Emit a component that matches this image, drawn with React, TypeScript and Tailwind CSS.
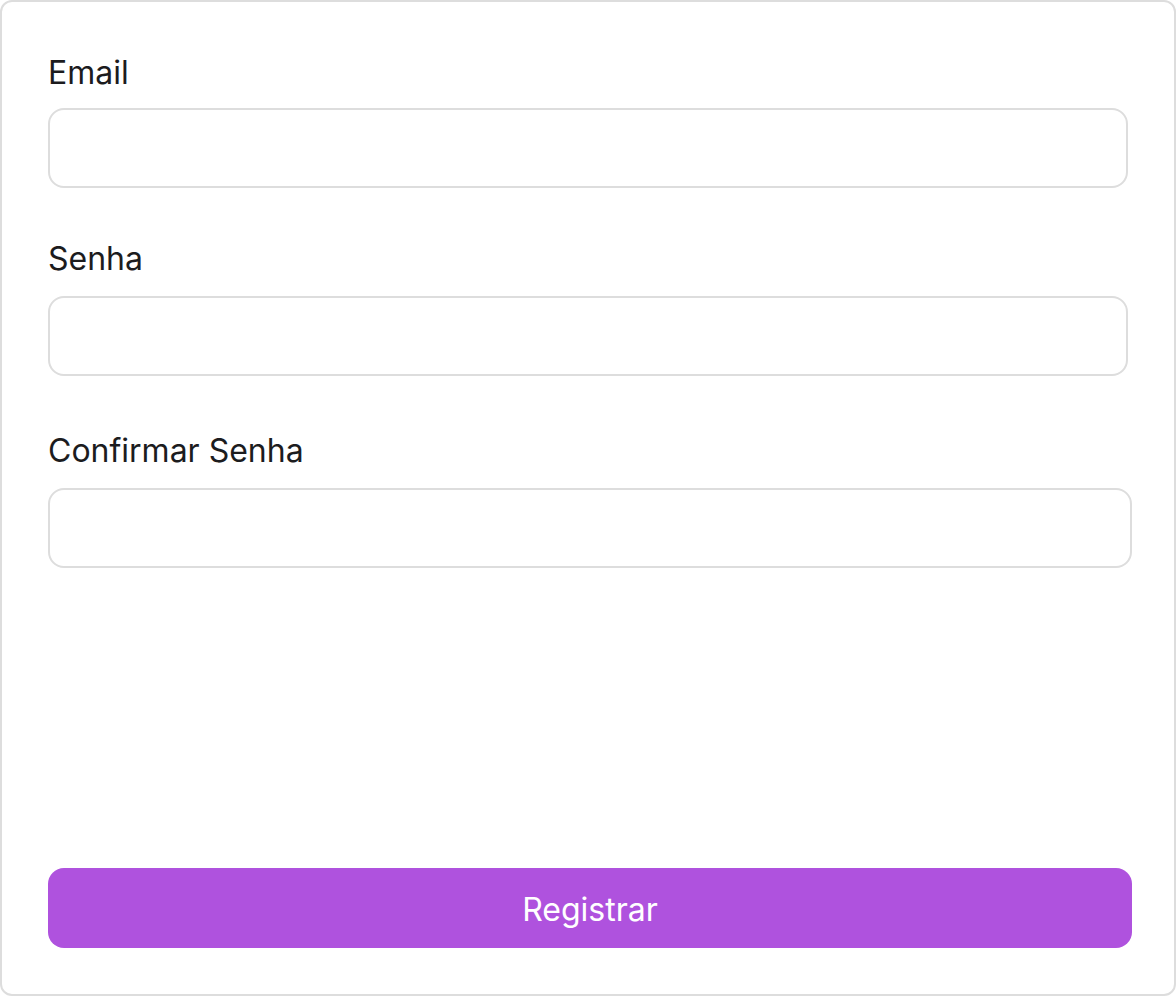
import React from "react";

export default function App() {
  return (
    <div className="w-[1176px] h-[996px] bg-white" style={{ fontFamily: "Inter, 'Noto Sans', sans-serif" }}>
      <div className="w-full h-full border-2 border-[#dddddd] rounded-[12px] bg-white flex flex-col pl-[46px] pt-[47px] pb-[46px]">
        <label className="block h-[48px] leading-[48px] text-[32px] text-[#1c1c1e]">Email</label>
        <input className="mt-[11px] w-[1080px] h-[80px] shrink-0 border-2 border-[#dddddd] rounded-[16px] outline-none px-4 text-[32px]" />
        <label className="block mt-[47px] h-[48px] leading-[48px] text-[32px] text-[#1c1c1e]">Senha</label>
        <input type="password" className="mt-[13px] w-[1080px] h-[80px] shrink-0 border-2 border-[#dddddd] rounded-[16px] outline-none px-4 text-[32px]" />
        <label className="block mt-[51px] h-[48px] leading-[48px] text-[32px] text-[#1c1c1e]">Confirmar Senha</label>
        <input type="password" className="mt-[13px] w-[1084px] h-[80px] shrink-0 border-2 border-[#dddddd] rounded-[16px] outline-none px-4 text-[32px]" />
        <div className="flex-1" />
        <button className="w-[1084px] h-[80px] shrink-0 rounded-[16px] bg-[#af52de] text-white text-[32px] font-normal pt-[3px]">
          Registrar
        </button>
      </div>
    </div>
  );
}
